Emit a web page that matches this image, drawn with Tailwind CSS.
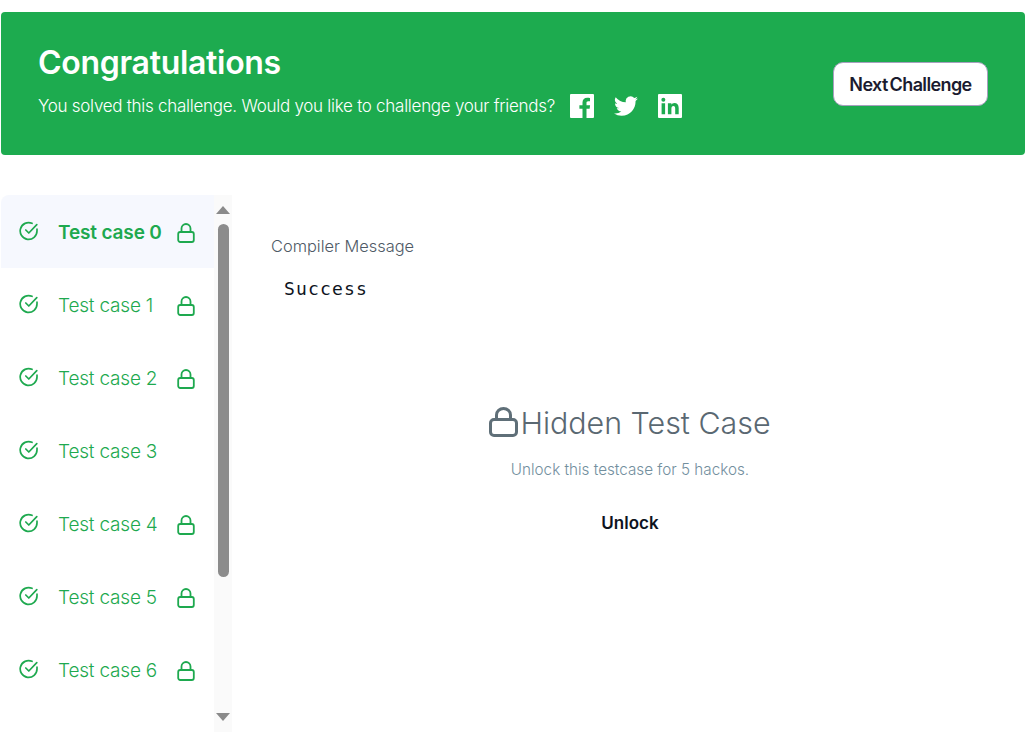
<!DOCTYPE html>
<html lang="en">
<head>
  <meta charset="UTF-8" />
  <title>Congratulations</title>
  <script src="https://cdn.jsdelivr.net/npm/@tailwindcss/browser@4"></script>
</head>
<body class="bg-white h-[748px] overflow-hidden font-['Inter',sans-serif]">
  <!-- banner -->
  <div class="mt-3 ml-px h-[143px] rounded-[4px] bg-[#1dab4f] flex justify-between text-white">
    <div class="pl-[37px] pt-[31px]">
      <h1 class="text-[32px] leading-10 font-semibold tracking-[-0.3px]">Congratulations</h1>
      <div class="flex items-center mt-[10px]">
        <span class="text-[17px] leading-6 font-light tracking-[-0.27px] w-[532px] pt-[1px]">You solved this challenge. Would you like to challenge your friends?</span>
        <svg class="w-6 h-6" viewBox="0 0 24 24" fill="#fff"><path d="M1 0h22a1 1 0 0 1 1 1v22a1 1 0 0 1-1 1h-6.500v-9.200h3.100l.5-3.600h-3.600V8.900c0-1 .3-1.750 1.800-1.750H20V3.900c-.4 0-1.500-.15-2.800-.15-2.800 0-4.700 1.700-4.700 4.800v2.650H9.400v3.600h3.100V24H1a1 1 0 0 1-1-1V1a1 1 0 0 1 1-1z"/></svg>
        <svg class="w-6 h-6 ml-5" viewBox="0 0 24 24" fill="#fff"><path d="M24 4.600a9.800 9.800 0 0 1-2.800.8 4.900 4.900 0 0 0 2.150-2.700 9.800 9.800 0 0 1-3.100 1.200 4.900 4.900 0 0 0-8.400 4.450A13.900 13.900 0 0 1 1.700 3.200a4.900 4.900 0 0 0 1.500 6.550 4.900 4.900 0 0 1-2.200-.6v.05a4.900 4.900 0 0 0 3.950 4.800 4.900 4.900 0 0 1-2.200.1 4.900 4.900 0 0 0 4.600 3.400A9.900 9.900 0 0 1 0 19.500a13.900 13.900 0 0 0 7.550 2.200c9.050 0 14-7.500 14-14v-.65A10 10 0 0 0 24 4.600z"/></svg>
        <svg class="w-6 h-6 ml-5" viewBox="0 0 24 24" fill="#fff"><path fill-rule="evenodd" d="M1 0h22a1 1 0 0 1 1 1v22a1 1 0 0 1-1 1H1a1 1 0 0 1-1-1V1a1 1 0 0 1 1-1zm2.600 9.300v11h3.500v-11H3.600zM5.350 3.700a2 2 0 1 0 0 4 2 2 0 0 0 0-4zM9.900 9.300v11h3.500v-5.700c0-1.500.6-2.600 2-2.600s1.800 1.100 1.800 2.700v5.600h3.500v-6.300c0-3.200-1.700-4.950-4.200-4.950-1.600 0-2.600.8-3.100 1.700V9.300H9.900z"/></svg>
      </div>
    </div>
    <div class="pr-[37px] pt-[50px]">
      <button class="w-[155px] h-11 pt-[1px] bg-white rounded-[10px] border border-[#a79fbf] text-[#1b1b2f] text-[18px] font-semibold tracking-[-0.62px] [word-spacing:-2px]">Next Challenge</button>
    </div>
  </div>

  <div class="mt-10 flex">
    <!-- test case list -->
    <div class="w-[214px] shrink-0 text-[#1ea94f] text-[19px] font-light tracking-[-0.2px]">
      <div class="h-[73px] ml-px flex items-center pl-[18px] bg-[#f6f8fe] rounded-tl-lg font-semibold">
        <svg class="w-5 h-5 mb-[2px]" viewBox="0 0 20 20" fill="none" stroke="#1ea94f" stroke-width="1.700" stroke-linecap="round" stroke-linejoin="round"><path d="M18 8.200V10a8.400 8.400 0 1 1-5-7.700"/><path d="M6.800 9l3 3 8-8.300"/></svg>
        <span class="ml-[19px] w-[119px] pt-[4px] tracking-[-0.15px]">Test case 0</span>
        <svg class="w-[18px] h-5 mt-[2px]" viewBox="0 0 18 20" fill="none" stroke="#1ea94f" stroke-width="1.800"><rect x="1.200" y="9" width="15.600" height="10" rx="2"/><path d="M4.500 9V5.500a4.500 4.500 0 0 1 9 0V9"/></svg>
      </div>
      <div class="h-[73px] flex items-center pl-[19px]">
        <svg class="w-5 h-5 mb-[2px]" viewBox="0 0 20 20" fill="none" stroke="#1ea94f" stroke-width="1.700" stroke-linecap="round" stroke-linejoin="round"><path d="M18 8.200V10a8.400 8.400 0 1 1-5-7.700"/><path d="M6.800 9l3 3 8-8.300"/></svg>
        <span class="ml-[19px] w-[119px] pt-[4px]">Test case 1</span>
        <svg class="w-[18px] h-5 mt-[2px]" viewBox="0 0 18 20" fill="none" stroke="#1ea94f" stroke-width="1.800"><rect x="1.200" y="9" width="15.600" height="10" rx="2"/><path d="M4.500 9V5.500a4.500 4.500 0 0 1 9 0V9"/></svg>
      </div>
      <div class="h-[73px] flex items-center pl-[19px]">
        <svg class="w-5 h-5 mb-[2px]" viewBox="0 0 20 20" fill="none" stroke="#1ea94f" stroke-width="1.700" stroke-linecap="round" stroke-linejoin="round"><path d="M18 8.200V10a8.400 8.400 0 1 1-5-7.700"/><path d="M6.800 9l3 3 8-8.300"/></svg>
        <span class="ml-[19px] w-[119px] pt-[4px]">Test case 2</span>
        <svg class="w-[18px] h-5 mt-[2px]" viewBox="0 0 18 20" fill="none" stroke="#1ea94f" stroke-width="1.800"><rect x="1.200" y="9" width="15.600" height="10" rx="2"/><path d="M4.500 9V5.500a4.500 4.500 0 0 1 9 0V9"/></svg>
      </div>
      <div class="h-[73px] flex items-center pl-[19px]">
        <svg class="w-5 h-5 mb-[2px]" viewBox="0 0 20 20" fill="none" stroke="#1ea94f" stroke-width="1.700" stroke-linecap="round" stroke-linejoin="round"><path d="M18 8.200V10a8.400 8.400 0 1 1-5-7.700"/><path d="M6.800 9l3 3 8-8.300"/></svg>
        <span class="ml-[19px] w-[119px] pt-[4px]">Test case 3</span>
      </div>
      <div class="h-[73px] flex items-center pl-[19px]">
        <svg class="w-5 h-5 mb-[2px]" viewBox="0 0 20 20" fill="none" stroke="#1ea94f" stroke-width="1.700" stroke-linecap="round" stroke-linejoin="round"><path d="M18 8.200V10a8.400 8.400 0 1 1-5-7.700"/><path d="M6.800 9l3 3 8-8.300"/></svg>
        <span class="ml-[19px] w-[119px] pt-[4px]">Test case 4</span>
        <svg class="w-[18px] h-5 mt-[2px]" viewBox="0 0 18 20" fill="none" stroke="#1ea94f" stroke-width="1.800"><rect x="1.200" y="9" width="15.600" height="10" rx="2"/><path d="M4.500 9V5.500a4.500 4.500 0 0 1 9 0V9"/></svg>
      </div>
      <div class="h-[73px] flex items-center pl-[19px]">
        <svg class="w-5 h-5 mb-[2px]" viewBox="0 0 20 20" fill="none" stroke="#1ea94f" stroke-width="1.700" stroke-linecap="round" stroke-linejoin="round"><path d="M18 8.200V10a8.400 8.400 0 1 1-5-7.700"/><path d="M6.800 9l3 3 8-8.300"/></svg>
        <span class="ml-[19px] w-[119px] pt-[4px]">Test case 5</span>
        <svg class="w-[18px] h-5 mt-[2px]" viewBox="0 0 18 20" fill="none" stroke="#1ea94f" stroke-width="1.800"><rect x="1.200" y="9" width="15.600" height="10" rx="2"/><path d="M4.500 9V5.500a4.500 4.500 0 0 1 9 0V9"/></svg>
      </div>
      <div class="h-[73px] flex items-center pl-[19px]">
        <svg class="w-5 h-5 mb-[2px]" viewBox="0 0 20 20" fill="none" stroke="#1ea94f" stroke-width="1.700" stroke-linecap="round" stroke-linejoin="round"><path d="M18 8.200V10a8.400 8.400 0 1 1-5-7.700"/><path d="M6.800 9l3 3 8-8.300"/></svg>
        <span class="ml-[19px] w-[119px] pt-[4px]">Test case 6</span>
        <svg class="w-[18px] h-5 mt-[2px]" viewBox="0 0 18 20" fill="none" stroke="#1ea94f" stroke-width="1.800"><rect x="1.200" y="9" width="15.600" height="10" rx="2"/><path d="M4.500 9V5.500a4.500 4.500 0 0 1 9 0V9"/></svg>
      </div>
    </div>

    <!-- scrollbar -->
    <div class="w-[18px] h-[537px] shrink-0 bg-[#fafafa] flex flex-col items-center">
      <div class="mt-[11px] w-0 h-0 border-x-[7px] border-x-transparent border-b-[8px] border-b-[#8a8a8a]"></div>
      <div class="mt-[10px] w-[11px] h-[353px] rounded-full bg-[#8c8c8c]"></div>
      <div class="mt-[136px] w-0 h-0 border-x-[7px] border-x-transparent border-t-[8px] border-t-[#8a8a8a]"></div>
    </div>

    <!-- details -->
    <div class="w-[793px] shrink-0">
      <div class="pl-[39px] pt-[41px]">
        <div class="text-[16.400px] leading-5 font-light text-[#4f5a66]">Compiler Message</div>
        <pre class="pl-[13px] mt-[21px] text-[18px] leading-6 tracking-[1.150px] text-[#0e141e] font-['DejaVu_Sans_Mono',monospace]">Success</pre>
      </div>
      <div class="flex flex-col items-center pt-[102px] pl-[3px]">
        <div class="flex items-center text-[#5a6872]">
          <svg class="w-[29px] h-[30px] mb-[2px]" viewBox="0 0 29 30" fill="none" stroke="#5f6f78" stroke-width="3"><rect x="1.500" y="12.500" width="26" height="16" rx="3.500"/><path d="M7.500 12.500V8a7 6.500 0 0 1 14 0v4.500"/></svg>
          <h2 class="ml-[2px] text-[30.400px] leading-10 font-light">Hidden Test Case</h2>
        </div>
        <p class="mt-[17px] text-[15.250px] leading-5 font-light text-[#738f9e]">Unlock this testcase for 5 hackos.</p>
        <button class="mt-[33px] text-[17px] leading-5 font-semibold text-[#0e141e]">Unlock</button>
      </div>
    </div>
  </div>
</body>
</html>
